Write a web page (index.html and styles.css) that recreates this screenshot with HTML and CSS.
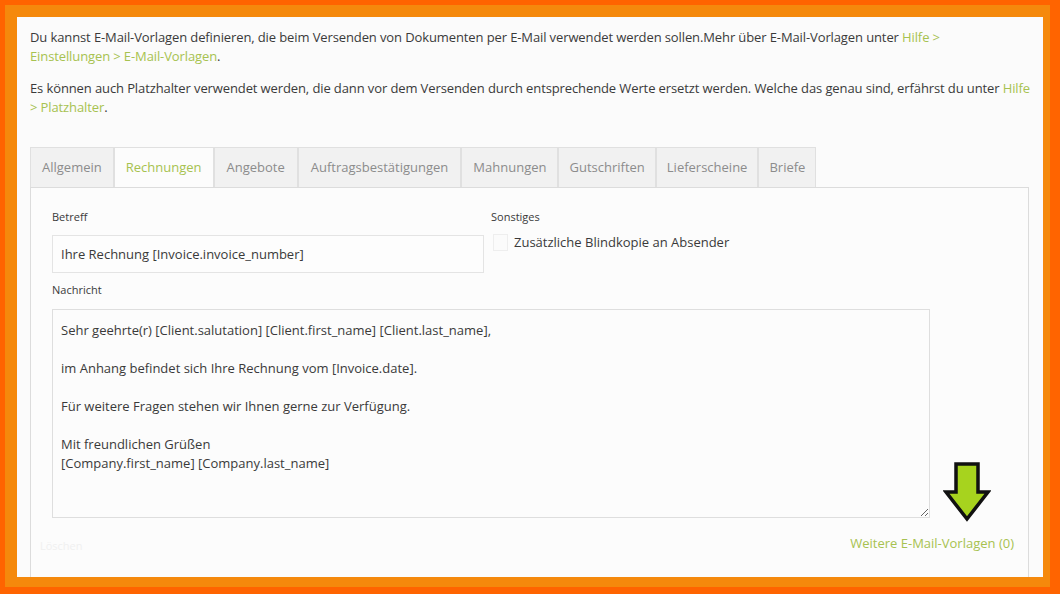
FILE: index.html
```html
<!DOCTYPE html>
<html lang="de">
<head>
<meta charset="utf-8">
<title>E-Mail-Vorlagen</title>
<link rel="stylesheet" href="styles.css">
</head>
<body>
<div class="frame-outer">
  <div class="frame-inner">
    <div class="page">
      <p class="intro">Du kannst E-Mail-Vorlagen definieren, die beim Versenden von Dokumenten per E-Mail verwendet werden sollen.Mehr über E-Mail-Vorlagen unter <a class="link" href="#">Hilfe &gt; <span class="keep">Einstellungen &gt; E-Mail-Vorlagen</span></a>.</p>
      <p class="intro">Es können auch Platzhalter verwendet werden, die dann vor dem Versenden durch entsprechende Werte ersetzt werden. Welche das genau sind, erfährst du unter <a class="link" href="#">Hilfe <span class="keep">&gt; Platzhalter</span></a>.</p>

      <div class="tabs">
        <div class="tab">Allgemein</div>
        <div class="tab active">Rechnungen</div>
        <div class="tab wide">Angebote</div>
        <div class="tab wide">Auftragsbestätigungen</div>
        <div class="tab">Mahnungen</div>
        <div class="tab slim">Gutschriften</div>
        <div class="tab slim">Lieferscheine</div>
        <div class="tab slim">Briefe</div>
      </div>

      <div class="panel">
        <div class="row">
          <div class="col-main">
            <div class="label">Betreff</div>
            <div class="input">Ihre Rechnung [Invoice.invoice_number]</div>
          </div>
          <div class="col-side">
            <div class="label">Sonstiges</div>
            <label class="check"><span class="box"></span>Zusätzliche Blindkopie an Absender</label>
          </div>
        </div>
        <div class="label msg-label">Nachricht</div>
        <textarea class="message">Sehr geehrte(r) [Client.salutation] [Client.first_name] [Client.last_name],

im Anhang befindet sich Ihre Rechnung vom [Invoice.date].

Für weitere Fragen stehen wir Ihnen gerne zur Verfügung.

Mit freundlichen Grüßen
[Company.first_name] [Company.last_name]</textarea>
        <div class="footer">
          <span class="faint">Löschen</span>
          <a class="link more" href="#">Weitere E-Mail-Vorlagen (0)</a>
        </div>
        <svg class="arrow" width="48" height="64" viewBox="0 0 48 64">
          <polygon points="13,4 35,4 35,32 45,32 24,59 3,32 13,32" fill="#a7d31e" stroke="#111" stroke-width="3.5" stroke-linejoin="miter"/>
        </svg>
      </div>
    </div>
  </div>
</div>
</body>
</html>
```
FILE: styles.css
```css
* { box-sizing: border-box; }
html, body { margin: 0; padding: 0; }
body {
  background: #ff6400;
  font-family: "Open Sans", "Noto Sans", sans-serif;
  font-size: 13px;
  color: #3a3a3a;
}
.frame-outer {
  width: 1060px;
  height: 594px;
  padding: 5px 10px 7px 5px;
}
.frame-inner {
  height: 100%;
  background: #f5890c;
  padding: 12px 7px 10px 12px;
}
.page {
  height: 100%;
  background: #fbfbfb;
  padding: 11px 11px 0 13px;
  overflow: hidden;
}
.intro {
  margin: 0 0 13px 0;
  line-height: 19px;
  letter-spacing: -0.11px;
}
.keep { white-space: nowrap; }
.link {
  color: #a7c250;
  text-decoration: none;
}
.tabs {
  display: flex;
  margin-top: 30px;
  height: 41px;
}
.tab {
  height: 41px;
  line-height: 39px;
  padding: 0 11px;
  border: 1px solid #e0e0e0;
  border-bottom-color: #dcdcdc;
  background: #f1f1f1;
  color: #8c8c8c;
}
.tab.wide { padding: 0 12px; }
.tab.slim { padding: 0 10px; }
.tab.active {
  background: #fcfcfc;
  border-bottom-color: #fcfcfc;
  color: #a7c250;
}
.panel {
  position: relative;
  margin-top: -1px;
  width: 999px;
  height: 420px;
  border: 1px solid #dcdcdc;
  background: #fcfcfc;
  padding: 21px 14px 0 21px;
}
.row {
  display: flex;
  gap: 7px;
}
.col-main { width: 432px; }
.col-side { flex: 1; }
.label {
  font-size: 11px;
  line-height: 15px;
  margin-bottom: 11px;
  color: #3a3a3a;
}
.msg-label { margin-bottom: 12px; }
.input {
  height: 38px;
  border: 1px solid #e4e4e4;
  background: #fdfdfd;
  padding: 0 8px;
  line-height: 36px;
  margin-bottom: 9px;
}
.check {
  display: flex;
  align-items: flex-start;
  margin-top: -1px;
  margin-left: 2px;
  line-height: 17px;
}
.box {
  width: 15px;
  height: 17px;
  border: 1px solid #eeeeee;
  background: #fbfbfb;
  margin-right: 6px;
}
.message {
  display: block;
  width: 878px;
  height: 209px;
  margin: 0;
  border: 1px solid #dedede;
  background: #fcfcfc;
  padding: 11px 8px;
  font-family: "Open Sans", "Noto Sans", sans-serif;
  font-size: 13px;
  line-height: 19px;
  color: #3a3a3a;
  resize: both;
  outline: none;
}
.footer {
  display: flex;
  justify-content: space-between;
  align-items: flex-start;
  margin-left: -12px;
  margin-top: 16px;
}
.faint {
  color: #f0f0f0;
  font-size: 11px;
  margin-top: 4px;
}
.more { line-height: 18px; }
.arrow {
  position: absolute;
  left: 912px;
  top: 272px;
}
```
